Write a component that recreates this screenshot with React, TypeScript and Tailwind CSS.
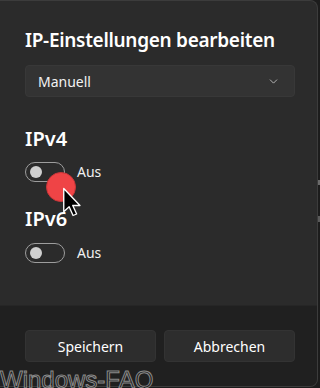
import { ChevronDown } from "lucide-react"

const Toggle = () => (
  <div className="flex items-center gap-3">
    <div className="w-10 h-5 rounded-full border border-[#9d9d9d] flex items-center px-[4px]">
      <div className="w-3 h-3 rounded-full bg-[#cfcfcf]" />
    </div>
    <span className="text-[14px] text-[#f0f0f0]">Aus</span>
  </div>
)

const App = () => {
  return (
    <div className="relative w-[320px] h-[388px] overflow-hidden bg-[#1c1c1c] font-['Noto_Sans',sans-serif]">
      <div className="w-[318px] h-[387px] flex flex-col bg-[#2b2b2b] rounded-r-lg border-r border-t border-b border-[#3c3c3c] overflow-hidden">
        <div className="flex-1 flex flex-col pl-[25px] pr-[22px] pt-[25px]">
          <h1 className="text-[19px] leading-[28px] font-semibold text-white tracking-[-0.3px]">
            IP-Einstellungen bearbeiten
          </h1>
          <div className="mt-[11px] h-8 w-[270px] rounded-[4px] bg-[#333333] border border-[#383838] flex items-center justify-between pl-3 pr-[14px]">
            <span className="text-[14px] text-[#f2f2f2]">Manuell</span>
            <ChevronDown size={13} strokeWidth={1.5} className="text-[#cfcfcf]" />
          </div>
          <h2 className="mt-[28px] text-[20px] leading-[28px] font-semibold text-white">IPv4</h2>
          <div className="mt-[8px]">
            <Toggle />
          </div>
          <h2 className="mt-[23px] text-[20px] leading-[28px] font-semibold text-white">IPv6</h2>
          <div className="mt-[9px]">
            <Toggle />
          </div>
        </div>
        <div className="h-[81px] shrink-0 bg-[#202020] border-t border-[#262626] flex gap-2 pl-[25px] pr-[22px] pt-[24px]">
          <button className="w-[131px] shrink-0 h-8 rounded-[4px] bg-[#2d2d2d] border border-[#333333] text-[14px] text-white">
            Speichern
          </button>
          <button className="w-[131px] shrink-0 h-8 rounded-[4px] bg-[#2d2d2d] border border-[#333333] text-[14px] text-white">
            Abbrechen
          </button>
        </div>
      </div>

      {/* click marker + cursor */}
      <div className="absolute left-[46px] top-[172px] w-[30px] h-[30px] rounded-full bg-[#ef4446] border border-[#c93538]" />
      <svg className="absolute left-[62px] top-[187px]" width="20" height="30" viewBox="0 0 13 20">
        <path
          d="M1 1 L1 16.5 L4.6 13.2 L7.2 19 L9.6 18 L7 12.3 L11.8 12.3 Z"
          fill="#000"
          stroke="#fff"
          strokeWidth="0.9"
          strokeLinejoin="round"
        />
      </svg>

      {/* scrollbar bits */}
      <div className="absolute left-[318px] top-[180px] w-[2px] h-[5px] bg-[#6a6a6a]" />
      <div className="absolute left-[318px] top-[216px] w-[2px] h-[6px] bg-[#5a5a5a]" />

      {/* watermark */}
      <div className="absolute left-0 top-[366px] text-[24px] leading-[28px] font-['Liberation_Sans',Arial,sans-serif] text-[#1a1a1a] [-webkit-text-stroke:1px_#8a8a8a]">
        Windows-FAQ
      </div>
    </div>
  )
}

export default App
